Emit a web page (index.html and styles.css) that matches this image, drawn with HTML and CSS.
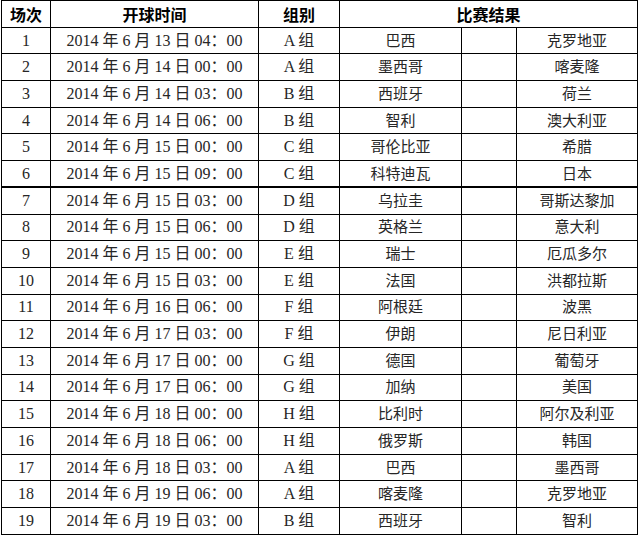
FILE: index.html
```html
<!DOCTYPE html>
<html lang="zh-CN">
<head>
<meta charset="utf-8">
<title>赛程</title>
<link rel="stylesheet" href="styles.css">
</head>
<body>
<table class="sched">
<colgroup>
<col class="c-no"><col class="c-time"><col class="c-grp"><col class="c-t1"><col class="c-sc"><col class="c-t2">
</colgroup>
<thead>
<tr class="head"><th>场次</th><th>开球时间</th><th>组别</th><th colspan="3">比赛结果</th></tr>
</thead>
<tbody>
<tr><td>1</td><td>2014 年 6 月 13 日 04：00</td><td>A 组</td><td>巴西</td><td></td><td>克罗地亚</td></tr>
<tr><td>2</td><td>2014 年 6 月 14 日 00：00</td><td>A 组</td><td>墨西哥</td><td></td><td>喀麦隆</td></tr>
<tr><td>3</td><td>2014 年 6 月 14 日 03：00</td><td>B 组</td><td>西班牙</td><td></td><td>荷兰</td></tr>
<tr><td>4</td><td>2014 年 6 月 14 日 06：00</td><td>B 组</td><td>智利</td><td></td><td>澳大利亚</td></tr>
<tr><td>5</td><td>2014 年 6 月 15 日 00：00</td><td>C 组</td><td>哥伦比亚</td><td></td><td>希腊</td></tr>
<tr class="sep"><td>6</td><td>2014 年 6 月 15 日 09：00</td><td>C 组</td><td>科特迪瓦</td><td></td><td>日本</td></tr>
<tr><td>7</td><td>2014 年 6 月 15 日 03：00</td><td>D 组</td><td>乌拉圭</td><td></td><td>哥斯达黎加</td></tr>
<tr><td>8</td><td>2014 年 6 月 15 日 06：00</td><td>D 组</td><td>英格兰</td><td></td><td>意大利</td></tr>
<tr><td>9</td><td>2014 年 6 月 15 日 00：00</td><td>E 组</td><td>瑞士</td><td></td><td>厄瓜多尔</td></tr>
<tr><td>10</td><td>2014 年 6 月 15 日 03：00</td><td>E 组</td><td>法国</td><td></td><td>洪都拉斯</td></tr>
<tr><td>11</td><td>2014 年 6 月 16 日 06：00</td><td>F 组</td><td>阿根廷</td><td></td><td>波黑</td></tr>
<tr><td>12</td><td>2014 年 6 月 17 日 03：00</td><td>F 组</td><td>伊朗</td><td></td><td>尼日利亚</td></tr>
<tr><td>13</td><td>2014 年 6 月 17 日 00：00</td><td>G 组</td><td>德国</td><td></td><td>葡萄牙</td></tr>
<tr><td>14</td><td>2014 年 6 月 17 日 06：00</td><td>G 组</td><td>加纳</td><td></td><td>美国</td></tr>
<tr><td>15</td><td>2014 年 6 月 18 日 00：00</td><td>H 组</td><td>比利时</td><td></td><td>阿尔及利亚</td></tr>
<tr><td>16</td><td>2014 年 6 月 18 日 06：00</td><td>H 组</td><td>俄罗斯</td><td></td><td>韩国</td></tr>
<tr><td>17</td><td>2014 年 6 月 18 日 03：00</td><td>A 组</td><td>巴西</td><td></td><td>墨西哥</td></tr>
<tr><td>18</td><td>2014 年 6 月 19 日 06：00</td><td>A 组</td><td>喀麦隆</td><td></td><td>克罗地亚</td></tr>
<tr><td>19</td><td>2014 年 6 月 19 日 03：00</td><td>B 组</td><td>西班牙</td><td></td><td>智利</td></tr>
</tbody>
</table>
</body>
</html>
```

FILE: styles.css
```css
html, body {
  margin: 0;
  padding: 0;
  background: #ffffff;
}
body {
  padding: 0 0 0 1px;
}
.sched {
  border-collapse: collapse;
  table-layout: fixed;
  width: 636px;
  font-family: "Liberation Serif", "Noto Sans CJK SC", serif;
  font-size: 16px;
  color: #262626;
}
.c-no { width: 49px; }
.c-time { width: 208px; }
.c-grp { width: 81px; }
.c-t1 { width: 122px; }
.c-sc { width: 55px; }
.c-t2 { width: 121px; }
.sched th, .sched td {
  border: 1px solid #000;
  padding: 0;
  text-align: center;
  vertical-align: middle;
  white-space: nowrap;
  overflow: hidden;
  line-height: 20px;
}
.sched tr {
  height: 26.7px;
}
.sched th {
  font-family: "Noto Sans CJK SC", sans-serif;
  font-weight: bold;
  font-size: 16px;
  color: #000;
}
.sched td:nth-child(4),
.sched td:nth-child(6) {
  font-size: 15px;
}
.sched tr.sep td {
  border-bottom: 2px solid #000;
}
```
